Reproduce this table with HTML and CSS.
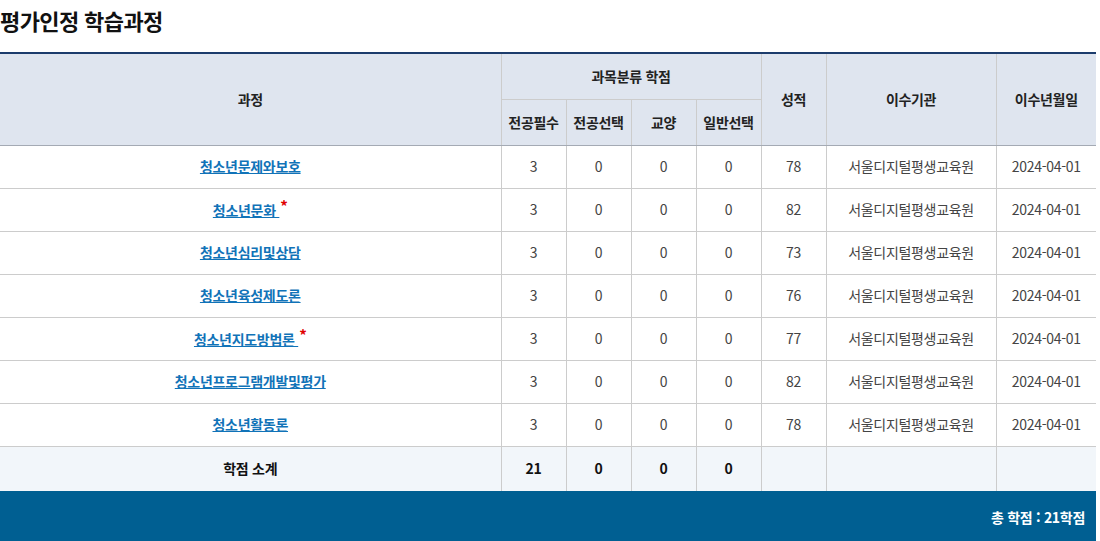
FILE: index.html
```html
<!DOCTYPE html>
<html lang="ko">
<head>
<meta charset="utf-8">
<link rel="stylesheet" href="styles.css">
</head>
<body>
<div class="wrap">
  <h2 class="title">평가인정 학습과정</h2>
  <table class="grid">
    <colgroup>
      <col class="c-course">
      <col class="c-num"><col class="c-num"><col class="c-num"><col class="c-num">
      <col class="c-num">
      <col class="c-inst">
      <col class="c-date">
    </colgroup>
    <thead>
      <tr class="h1">
        <th rowspan="2">과정</th>
        <th colspan="4">과목분류 학점</th>
        <th rowspan="2">성적</th>
        <th rowspan="2">이수기관</th>
        <th rowspan="2">이수년월일</th>
      </tr>
      <tr class="h2">
        <th>전공필수</th>
        <th>전공선택</th>
        <th>교양</th>
        <th>일반선택</th>
      </tr>
    </thead>
    <tbody>
      <tr><td><a href="#">청소년문제와보호</a></td><td>3</td><td>0</td><td>0</td><td>0</td><td>78</td><td>서울디지털평생교육원</td><td>2024-04-01</td></tr>
      <tr><td><a href="#">청소년문화 </a> <span class="star">*</span></td><td>3</td><td>0</td><td>0</td><td>0</td><td>82</td><td>서울디지털평생교육원</td><td>2024-04-01</td></tr>
      <tr><td><a href="#">청소년심리및상담</a></td><td>3</td><td>0</td><td>0</td><td>0</td><td>73</td><td>서울디지털평생교육원</td><td>2024-04-01</td></tr>
      <tr><td><a href="#">청소년육성제도론</a></td><td>3</td><td>0</td><td>0</td><td>0</td><td>76</td><td>서울디지털평생교육원</td><td>2024-04-01</td></tr>
      <tr><td><a href="#">청소년지도방법론 </a> <span class="star">*</span></td><td>3</td><td>0</td><td>0</td><td>0</td><td>77</td><td>서울디지털평생교육원</td><td>2024-04-01</td></tr>
      <tr><td><a href="#">청소년프로그램개발및평가</a></td><td>3</td><td>0</td><td>0</td><td>0</td><td>82</td><td>서울디지털평생교육원</td><td>2024-04-01</td></tr>
      <tr><td><a href="#">청소년활동론</a></td><td>3</td><td>0</td><td>0</td><td>0</td><td>78</td><td>서울디지털평생교육원</td><td>2024-04-01</td></tr>
    </tbody>
    <tfoot>
      <tr class="sum"><td>학점 소계</td><td>21</td><td>0</td><td>0</td><td>0</td><td></td><td></td><td></td></tr>
    </tfoot>
  </table>
  <div class="total">총 학점 : 21학점</div>
</div>
</body>
</html>
```

FILE: styles.css
```css
html, body {
  margin: 0;
  padding: 0;
  background: #fff;
}
body {
  font-family: "Noto Sans CJK KR", "Noto Sans", sans-serif;
  color: #444;
}
.wrap {
  width: 1096px;
}
.title {
  margin: 0 0 12px 0;
  height: 40px;
  line-height: 40px;
  font-size: 22px;
  font-weight: 700;
  color: #111;
  letter-spacing: -0.6px;
}
.grid {
  width: 1096px;
  border-collapse: collapse;
  table-layout: fixed;
  border-top: 2px solid #1c3c6c;
  font-size: 14px;
  letter-spacing: -0.3px;
}
.c-course { width: 501px; }
.c-num { width: 65px; }
.c-inst { width: 170px; }
.c-date { width: 100px; }
.grid th, .grid td {
  text-align: center;
  padding: 0 0 2px 0;
  border: 1px solid #cccccc;
}
.grid tr > :first-child { border-left: none; }
.grid tr > :last-child { border-right: none; }
.grid th {
  background: #dfe5ef;
  color: #222;
  font-weight: 700;
}
.h1 th { height: 43px; }
.h2 th { height: 43px; }
.grid thead tr:last-child th,
.grid thead th[rowspan] { border-bottom: 1px solid #a4aab4; }
.grid tbody td {
  height: 40px;
  color: #444;
}
.grid a {
  color: #1173b8;
  font-weight: 700;
  text-decoration: underline;
}
.star {
  color: #e00000;
  font-weight: 700;
  font-size: 15px;
  position: relative;
  top: -4px;
  margin-left: 1px;
}
.sum td {
  height: 42px;
  background: #f2f6fa;
  color: #111;
  font-weight: 700;
  border-top: 1px solid #a4aab4;
  border-bottom: none;
}
.total {
  background: #005f92;
  color: #fff;
  font-size: 14px;
  font-weight: 700;
  text-align: right;
  height: 52px;
  line-height: 52px;
  padding-right: 11px;
  letter-spacing: -0.3px;
}
```
